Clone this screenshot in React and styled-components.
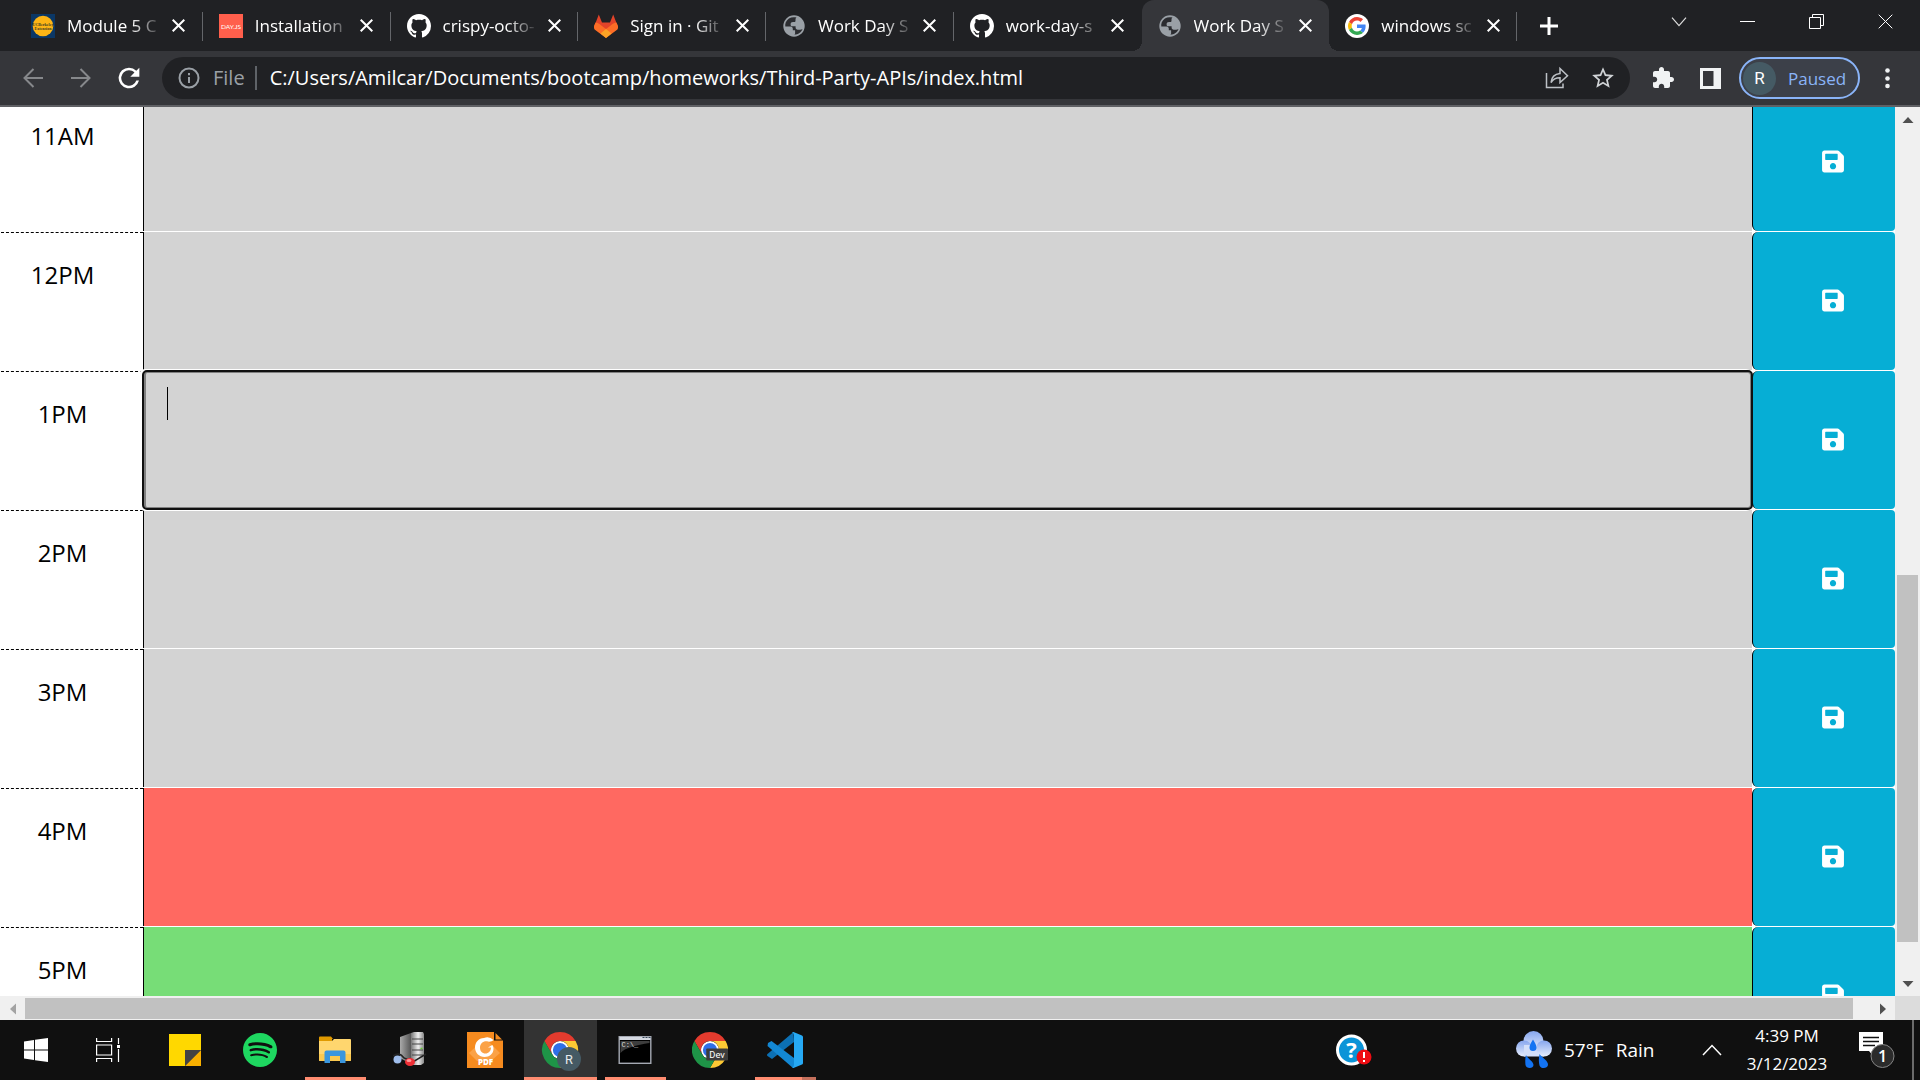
import React from 'react';
import styled, { createGlobalStyle, css } from 'styled-components';

const UI = "'Open Sans', 'Noto Sans', sans-serif";

const GlobalStyle = createGlobalStyle`
  *, *::before, *::after { box-sizing: border-box; }
  html, body { margin: 0; padding: 0; }
  body { background: #fff; font-family: ${UI}; overflow: hidden; }
  button { font: inherit; color: inherit; border: 0; padding: 0; background: none; cursor: pointer; }
  svg { display: block; flex: none; }
`;

/* ---------- layout ---------- */

const Desktop = styled.div`
  display: flex;
  flex-direction: column;
  height: 100vh;
`;

const TabStrip = styled.header`
  display: flex;
  height: 51px;
  padding-left: 15px;
  background: #202124;
  color: #fff;
`;

const TabList = styled.div`
  display: flex;
  flex: 0 1 1502px;
  min-width: 0;
`;

const Tab = styled.div`
  position: relative;
  flex: 1 1 0;
  min-width: 0;
  display: flex;
  align-items: center;
  gap: 12px;
  padding: 0 16px;
  ${p => p.$divided && css`
    &::after {
      content: '';
      position: absolute;
      right: 0;
      top: 12px;
      width: 1px;
      height: 29px;
      background: #64666a;
    }
  `}
  ${p => p.$active && css`
    background: #35363a;
    border-radius: 12px 12px 0 0;
    &::before, &::after {
      content: '';
      position: absolute;
      bottom: 0;
      width: 10px;
      height: 10px;
    }
    &::before { left: -10px; background: radial-gradient(circle at 0 0, transparent 10px, #35363a 10px); }
    &::after { right: -10px; background: radial-gradient(circle at 100% 0, transparent 10px, #35363a 10px); }
  `}
`;

const TabTitle = styled.span`
  flex: 1;
  min-width: 0;
  white-space: nowrap;
  font-size: 17px;
  line-height: 24px;
  mask-image: linear-gradient(to right, #000 70%, transparent 105%);
`;

const TabClose = styled.button`
  display: grid;
  place-items: center;
  width: 16px;
  height: 24px;
`;

const NewTab = styled.button`
  width: 64px;
  display: grid;
  place-items: center;
`;

const WindowControls = styled.div`
  display: flex;
  align-items: flex-start;
  margin-left: auto;
`;

const WindowButton = styled.button`
  display: grid;
  place-items: center;
  width: 69px;
  height: 43px;
`;

const Toolbar = styled.div`
  display: flex;
  align-items: center;
  height: 56px;
  padding: 0 13px 0 9px;
  background: #35363a;
  border-bottom: 2px solid #5f6064;
  color: #f1f3f4;
`;

const ToolButton = styled.button`
  display: grid;
  place-items: center;
  width: ${p => p.$width || 48}px;
  height: 42px;
`;

const Omnibox = styled.div`
  flex: 1;
  display: flex;
  align-items: center;
  height: 42px;
  margin: 0 8px 0 9px;
  padding: 0 5px 0 16px;
  border-radius: 21px;
  background: #202124;
`;

const Scheme = styled.label`
  margin: 0 10px 0 13px;
  color: #9aa0a6;
  font-size: 20px;
  line-height: 28px;
`;

const Address = styled.input`
  flex: 1;
  min-width: 0;
  height: 24px;
  padding: 0 0 0 13px;
  border: 0;
  border-left: 2px solid #5f6368;
  outline: 0;
  background: transparent;
  color: #fff;
  font: 20px/24px ${UI};
`;

const Profile = styled.button`
  display: flex;
  align-items: center;
  width: 121px;
  height: 42px;
  margin: 0 7px 0 5px;
  padding-left: 2px;
  gap: 12px;
  border: 2px solid #8ab4f8;
  border-radius: 21px;
  background: #3c4049;
  color: #8ab4f8;
  font-size: 17px;
`;

const Avatar = styled.span`
  display: grid;
  place-items: center;
  width: 33px;
  height: 33px;
  border-radius: 50%;
  background: #455a64;
  color: #fff;
  font: 17px/33px Roboto, sans-serif;
`;

/* ---------- planner page ---------- */

const Viewport = styled.div`
  flex: 1;
  min-height: 0;
  display: grid;
  grid-template: minmax(0, 1fr) 24px / minmax(0, 1fr) 25px;
  background: #f0f0f0;
`;

const Page = styled.main`
  overflow: hidden;
  background: #fff;
`;

const Schedule = styled.div`
  margin-top: -14px;
  padding-left: 1px;
`;

const TimeBlock = styled.section`
  display: flex;
  height: 139px;
`;

const Hour = styled.label`
  width: 142px;
  padding: 24px 19px 0 0;
  border-top: 1px dashed #000;
  color: #000;
  font: 24px/36px 'Open Sans', sans-serif;
  text-align: center;
`;

const Slot = styled.div`
  position: relative;
  flex: 1;
  display: flex;
  padding-bottom: 1px;
  z-index: ${p => (p.$focused ? 1 : 0)};
`;

const tones = { past: '#d3d3d3', present: '#ff6961', future: '#77dd77' };

const Entry = styled.textarea`
  flex: 1;
  padding: 16px 24px;
  border: 0;
  border-left: 1px solid #000;
  outline: 0;
  resize: none;
  background: ${p => tones[p.$tone]};
  color: #000;
  font: 24px/36px 'Open Sans', sans-serif;
  ${p => p.$focused && css`
    border-radius: 4px;
    outline: 2px solid #101010;
    outline-offset: -1px;
    box-shadow: -2px 0 0 2px #fff, inset 0 0 0 2px #808080;
  `}
`;

const Caret = styled.span`
  position: absolute;
  left: 24px;
  top: 16px;
  width: 1px;
  height: 33px;
  background: #000;
`;

const Save = styled.button`
  display: flex;
  align-items: center;
  justify-content: center;
  width: 143px;
  height: 138px;
  padding: 0 0 1px 18px;
  border-left: 1px solid #000;
  border-radius: 6px 4px 4px 6px;
  background: #06aed5;
  color: #fff;
`;

const ScrollBar = styled.div`
  display: flex;
  flex-direction: ${p => (p.$vertical ? 'column' : 'row')};
  padding: ${p => (p.$vertical ? '0 2px' : '2px 0 1px')};
`;

const ScrollArrow = styled.span`
  flex: 0 0 25px;
  display: grid;
  place-items: center;
`;

const ScrollThumb = styled.span`
  flex: ${p => p.$grow} 1 0;
  background: #c1c1c1;
`;

const ScrollGap = styled.span`
  flex: ${p => p.$grow} 1 0;
`;

const Corner = styled.div`
  background: #dcdcdc;
`;

/* ---------- taskbar ---------- */

const Taskbar = styled.footer`
  display: flex;
  align-items: stretch;
  height: 60px;
  background: #101010;
  color: #fff;
`;

const StartButton = styled.button`
  width: 72px;
  display: grid;
  place-items: center;
`;

const Apps = styled.div`
  display: flex;
  gap: 2px;
  padding-left: 5px;
`;

const AppButton = styled.button`
  position: relative;
  width: 73px;
  padding-right: 1px;
  display: grid;
  place-items: center;
  background: ${p => (p.$active ? '#333' : 'transparent')};
  ${p => p.$running && css`
    &::after {
      content: '';
      position: absolute;
      bottom: 0;
      left: ${p.$active ? 0 : 6}px;
      right: ${p.$active ? 0 : 6}px;
      height: 3px;
      background: ${p.$stacked ? 'linear-gradient(to right, #ff8c70 47px, #c4705c 47px)' : '#ff8c70'};
    }
  `}
`;

const Tray = styled.div`
  display: flex;
  align-items: center;
  margin-left: auto;
`;

const Help = styled.button`
  margin-right: 144px;
`;

const Weather = styled.button`
  display: flex;
  align-items: center;
  gap: 12px;
  width: 176px;
  font-size: 19px;
  white-space: nowrap;
`;

const TrayButton = styled.button`
  width: ${p => p.$width}px;
  height: 60px;
  display: grid;
  place-items: center;
`;

const Clock = styled.time`
  width: 110px;
  text-align: center;
  font-size: 17px;
  line-height: 28px;
`;

const ShowDesktop = styled.button`
  align-self: stretch;
  width: 8px;
  border-left: 2px solid #6b6b6b;
`;

/* ---------- icons ---------- */

const GithubIcon = () => (
  <svg width="24" height="24" viewBox="0 0 16 16" fill="#fff">
    <path d="M8 0C3.58 0 0 3.58 0 8c0 3.54 2.29 6.53 5.47 7.59.4.07.55-.17.55-.38 0-.19-.01-.82-.01-1.49-2.01.37-2.53-.49-2.69-.94-.09-.23-.48-.94-.82-1.13-.28-.15-.68-.52-.01-.53.63-.01 1.08.58 1.23.82.72 1.21 1.87.87 2.33.66.07-.52.28-.87.51-1.07-1.78-.2-3.64-.89-3.64-3.95 0-.87.31-1.59.82-2.15-.08-.2-.36-1.02.08-2.12 0 0 .67-.21 2.2.82.64-.18 1.32-.27 2-.27s1.36.09 2 .27c1.53-1.04 2.2-.82 2.2-.82.44 1.1.16 1.92.08 2.12.51.56.82 1.27.82 2.15 0 3.07-1.87 3.75-3.65 3.95.29.25.54.73.54 1.48 0 1.07-.01 1.93-.01 2.2 0 .21.15.46.55.38A8.01 8.01 0 0 0 16 8c0-4.42-3.58-8-8-8z" />
  </svg>
);

const GlobeIcon = () => (
  <svg width="24" height="24" viewBox="0 0 24 24">
    <circle cx="12" cy="12" r="10.7" fill="#9aa0a6" />
    <path fill="#2b2c30" d="M14.5 3.6c-4.400-1.300-9 .5-10.700 4.700-.6 1.500-.7 2.900-.5 4.200h5.200c1.600 0 2.300 1 2.300 2.300v1.400h2.300v3.300c0 .5-.3.900-.8 1.200 3.900-.1 7-2.300 8.200-5.700-.7.500-1.500.7-2.400.7h-2.300c-1.300 0-2.200-.9-2.200-2.200v-1.200h-3.300c-1.200 0-1.700-.8-1.700-1.800 0-1.600.9-2.400 2.400-2.400h1.300c.8 0 1.200-.5 1.200-1.300V5.500c0-.8.3-1.400 1-1.900z" />
  </svg>
);

const BootcampIcon = () => (
  <svg width="24" height="24" viewBox="0 0 24 24">
    <rect width="24" height="24" fill="#0b3765" />
    <circle cx="12" cy="12" r="10.300" fill="#fdb515" />
    <text x="12" y="11.500" textAnchor="middle" fontFamily="Liberation Serif, serif" fontSize="4" fontWeight="bold" fill="#3b3a24">UCBerkeley</text>
    <text x="12" y="16" textAnchor="middle" fontFamily="Liberation Serif, serif" fontSize="4" fontWeight="bold" fill="#3b3a24">Extension</text>
  </svg>
);

const DayIcon = () => (
  <svg width="24" height="24" viewBox="0 0 24 24">
    <rect width="24" height="24" fill="#ff5f4c" />
    <text x="12" y="14.500" textAnchor="middle" fontFamily="Lato, sans-serif" fontSize="6.500" fill="#fff">DAY.JS</text>
  </svg>
);

const GitlabIcon = () => (
  <svg width="24" height="24" viewBox="0 0 24 24">
    <path fill="#e24329" d="M0 13 4.800.5 8 8.500h8L19.200.5 24 13l-5 4H5z" />
    <path fill="#fc6d26" d="M12 24 .6 15.500C-.2 14.500-.2 12.500.4 11l1.200-2.500c2 .3 4 1.400 5.400 2.700l5 3.800 5-3.800c1.400-1.300 3.400-2.400 5.400-2.700l1.200 2.500c.6 1.500.6 3.500-.2 4.500z" />
    <path fill="#fca326" d="m6.500 19.500 5.500-4.500 5.500 4.500L12 24z" />
  </svg>
);

const GoogleIcon = () => (
  <svg width="24" height="24" viewBox="-8 -8 64 64">
    <circle cx="24" cy="24" r="32" fill="#fff" />
    <path fill="#EA4335" d="M24 9.500c3.540 0 6.710 1.220 9.210 3.600l6.850-6.850C35.900 2.380 30.470 0 24 0 14.620 0 6.510 5.380 2.560 13.220l7.980 6.190C12.430 13.720 17.740 9.500 24 9.500z" />
    <path fill="#4285F4" d="M46.980 24.550c0-1.570-.15-3.090-.38-4.550H24v9.020h12.940c-.58 2.960-2.260 5.480-4.780 7.180l7.730 6c4.510-4.180 7.090-10.360 7.090-17.650z" />
    <path fill="#FBBC05" d="M10.530 28.590c-.48-1.450-.76-2.990-.76-4.590s.27-3.140.76-4.590l-7.980-6.190C.92 16.460 0 20.120 0 24c0 3.880.92 7.540 2.560 10.780l7.970-6.190z" />
    <path fill="#34A853" d="M24 48c6.480 0 11.930-2.130 15.890-5.810l-7.730-6c-2.150 1.450-4.920 2.300-8.160 2.300-6.260 0-11.570-4.220-13.470-9.910l-7.980 6.190C6.510 42.620 14.620 48 24 48z" />
  </svg>
);

const Cross = ({ size, weight }) => (
  <svg width={size} height={size} viewBox={`0 0 ${size} ${size}`} stroke="#fff" strokeWidth={weight}>
    <path d={`M.7.7 ${size - 0.7} ${size - 0.7}M${size - 0.7}.7.7 ${size - 0.7}`} />
  </svg>
);

const PlusIcon = () => (
  <svg width="18" height="18" viewBox="0 0 18 18" stroke="#fff" strokeWidth="3"><path d="M9 0v18M0 9h18" /></svg>
);
const ChevronDown = () => (
  <svg width="16" height="10" viewBox="0 0 16 10" fill="none" stroke="#ddd" strokeWidth="1.200"><path d="m1 .7 7 8 7-8" /></svg>
);
const MinimizeIcon = () => (
  <svg width="15" height="15" viewBox="0 0 15 15"><path d="M0 7h15v1H0z" fill="#fff" /></svg>
);
const RestoreIcon = () => (
  <svg width="15" height="15" viewBox="0 0 15 15" fill="none" stroke="#fff"><path d="M.5 3.500h11v11H.5zM3.500 3.500v-3h11v11h-3" /></svg>
);

const ArrowIcon = ({ flip }) => (
  <svg width="20" height="20" viewBox="0 0 20 20" fill="none" stroke="#86888b" strokeWidth="2" transform={flip ? 'scale(-1 1)' : undefined}>
    <path d="M20 10H2M10.500 1 1.500 10l9 9" />
  </svg>
);
const ReloadIcon = () => (
  <svg width="22" height="22" viewBox="3.500 3.500 17 17" fill="#fff">
    <path d="M17.650 6.350A7.958 7.958 0 0 0 12 4a8 8 0 1 0 7.730 10h-2.080A6 6 0 1 1 12 6c1.660 0 3.140.69 4.220 1.780L13 11h7V4l-2.350 2.350z" />
  </svg>
);
const InfoIcon = () => (
  <svg width="22" height="22" viewBox="0 0 22 22" fill="none" stroke="#9aa0a6" strokeWidth="2">
    <circle cx="11" cy="11" r="9.500" /><path d="M11 10v6M11 6v2.200" />
  </svg>
);
const ShareIcon = () => (
  <svg width="24" height="24" viewBox="0 0 24 24" fill="none" stroke="#bdc1c6" strokeWidth="1.500">
    <path d="M1.500 7v14.500H18V17.500" />
    <path d="M6 16.500c.5-5 3-8.500 9-9V2.500l7.500 7.300-7.500 6.700v-4.700c-4 0-7 1.500-9 4.700z" />
  </svg>
);
const StarIcon = () => (
  <svg width="26" height="26" viewBox="0 0 24 24" fill="#d0d3d6">
    <path d="m22 9.240-7.190-.62L12 2 9.190 8.630 2 9.240l5.460 4.730L5.820 21 12 17.270 18.180 21l-1.630-7.030L22 9.240zM12 15.400l-3.760 2.270 1-4.280-3.320-2.880 4.380-.38L12 6.100l1.710 4.040 4.380.38-3.320 2.880 1 4.280L12 15.400z" />
  </svg>
);
const PuzzleIcon = () => (
  <svg width="24" height="24" viewBox="1 0 24 24" overflow="visible" fill="#f1f3f4">
    <path transform="translate(2 0)" d="M20.500 11H19V7c0-1.100-.9-2-2-2h-4V3.500C13 2.120 11.880 1 10.500 1S8 2.120 8 3.500V5H4c-1.100 0-1.990.9-1.990 2v3.800H3.500c1.490 0 2.700 1.210 2.700 2.700s-1.210 2.700-2.700 2.700H2V20c0 1.100.9 2 2 2h3.800v-1.500c0-1.490 1.210-2.700 2.700-2.700 1.490 0 2.700 1.210 2.700 2.700V22H17c1.100 0 2-.9 2-2v-4h1.500c1.380 0 2.500-1.120 2.500-2.500S21.880 11 20.500 11z" />
  </svg>
);
const SidePanelIcon = () => (
  <svg width="21" height="21" viewBox="0 0 21 21"><path fillRule="evenodd" fill="#f1f3f4" d="M0 0h21v21H0zM3 3v15h10.500V3z" /></svg>
);
const DotsIcon = () => (
  <svg width="5" height="21" viewBox="0 0 5 21" fill="#f1f3f4"><circle cx="2.500" cy="2.500" r="2.300" /><circle cx="2.500" cy="10.500" r="2.300" /><circle cx="2.500" cy="18" r="2.300" /></svg>
);
const SaveIcon = () => (
  <svg width="22" height="25" viewBox="0 0 448 512" fill="currentColor">
    <path d="M433.941 129.941l-83.882-83.882A48 48 0 0 0 316.118 32H48C21.490 32 0 53.490 0 80v352c0 26.510 21.490 48 48 48h352c26.510 0 48-21.490 48-48V163.882a48 48 0 0 0-14.059-33.941zM224 416c-35.346 0-64-28.654-64-64 0-35.346 28.654-64 64-64s64 28.654 64 64c0 35.346-28.654 64-64 64zm96-304.520V212c0 6.627-5.373 12-12 12H76c-6.627 0-12-5.373-12-12V108c0-6.627 5.373-12 12-12h228.520c3.183 0 6.235 1.264 8.485 3.515l3.480 3.480A11.996 11.996 0 0 1 320 111.480z" />
  </svg>
);
const Triangle = ({ turn, color = '#505050' }) => (
  <svg width="12" height="12" viewBox="0 0 12 12" fill={color}><path d="M.5 9h11L6 3z" transform={`rotate(${turn} 6 6)`} /></svg>
);

const WindowsIcon = () => (
  <svg width="24" height="24" viewBox="0 0 24 24" fill="#fff"><path d="M0 3.400 10 2v9.500H0zM11 1.800 24 0v11.500H11zM0 12.500h10V22L0 20.600zM11 12.500h13V24l-13-1.800z" /></svg>
);
const TaskViewIcon = () => (
  <svg width="24" height="24" viewBox="0 0 24 24" fill="none" stroke="#fff" strokeWidth="1.200">
    <path d="M.6 0v3.500h15V0M.6 24v-3.500h15V24M.6 7h15v10H.6zM22.500 0v6M22.500 11v13" /><path d="M21 7h3v3h-3z" fill="#fff" stroke="none" />
  </svg>
);
const NotesIcon = () => (
  <svg width="32" height="32" viewBox="0 0 32 32">
    <path d="M0 0h32v16L16 32H0z" fill="#ffd800" /><path d="M16 32 32 16v16z" fill="#f9b000" /><path d="M16 16h16L16 32z" fill="#434343" />
  </svg>
);
const SpotifyIcon = () => (
  <svg width="34" height="34" viewBox="0 0 24 24" fill="#1ed760">
    <path d="M12 0C5.400 0 0 5.400 0 12s5.400 12 12 12 12-5.400 12-12S18.660 0 12 0zm5.521 17.340c-.24.359-.66.48-1.021.24-2.820-1.740-6.360-2.101-10.561-1.141-.418.122-.779-.179-.899-.539-.12-.421.18-.78.54-.9 4.560-1.021 8.520-.6 11.640 1.320.42.18.479.659.301 1.020zm1.440-3.300c-.301.42-.841.6-1.262.3-3.239-1.980-8.159-2.580-11.939-1.380-.479.12-1.020-.12-1.140-.6-.12-.48.12-1.021.6-1.141C9.600 9.900 15 10.561 18.720 12.840c.361.181.54.78.241 1.200zm.12-3.360C15.240 8.400 8.820 8.160 5.160 9.301c-.6.179-1.200-.181-1.380-.721-.18-.601.18-1.200.72-1.381 4.260-1.260 11.280-1.020 15.721 1.621.539.3.719 1.020.419 1.560-.299.421-1.020.599-1.559.3z" />
  </svg>
);
const FolderIcon = () => (
  <svg width="32" height="28" viewBox="0 0 32 28">
    <path d="M0 1.500Q0 .5 1 .5h11l2 2.500h-1v6H0z" fill="#e09a00" />
    <path d="M0 5h13l2-2h16q1 0 1 1v20q0 1-1 1H1q-1 0-1-1z" fill="#ffd66e" />
    <path d="M0 18h32v6q0 1-1 1H1q-1 0-1-1z" fill="#fbc94f" />
    <path d="M5.500 27V16.500q0-2 2-2h17q2 0 2 2V27h-5.500v-7H11v7z" fill="#3a96dd" />
  </svg>
);
const ServerIcon = () => (
  <svg width="34" height="36" viewBox="0 0 34 36">
    <defs>
      <linearGradient id="steel"><stop offset="0" stopColor="#777" /><stop offset=".55" stopColor="#eee" /><stop offset="1" stopColor="#888" /></linearGradient>
      <linearGradient id="side"><stop offset="0" stopColor="#aaa" /><stop offset="1" stopColor="#555" /></linearGradient>
    </defs>
    <path d="m7 5 11-4v31L7 26z" fill="url(#side)" />
    <path d="m18 1 3-1h9l1 2v29l-3 2H18z" fill="url(#steel)" />
    <path d="M19 7h11M19 12h11M19 18h11M19 23h11" stroke="#444" strokeWidth="1" />
    <path d="M27.500 16.500h2" stroke="#6c3" strokeWidth="1.500" />
    <path d="M0 24q6-5 11 2l9 4 13-8" fill="none" stroke="#222" strokeWidth="1.500" />
    <ellipse cx="4.500" cy="27.500" rx="4" ry="4" fill="#9fbdec" /><ellipse cx="17" cy="30" rx="5" ry="4" fill="#ee2f36" />
    <ellipse cx="16" cy="28.500" rx="2.500" ry="1.500" fill="#ff9a9a" />
  </svg>
);
const FoxitIcon = () => (
  <svg width="36" height="36" viewBox="0 0 36 36">
    <path d="M0 0h27v8.500h9V36H0z" fill="#f68b1f" /><path d="M28.500 1 35 7.500h-6.500z" fill="#f68b1f" />
    <path d="m18 6 15 15-9 8H10L2 21z" fill="#fba247" />
    <path d="M26.500 8A9.300 9.300 0 0 0 17 6C11.500 6 8 10.500 8 15.500S12 25 17.500 25c5 0 9-3 9-8.500 0-1.500-.5-2.500-1.200-3.500l-4.300 2.500h3c0 3.500-2.500 6-5.500 6-3.500 0-5.500-2.500-5.500-6C13 11.500 16.500 8.500 21 9.500c2 .5 4 0 5.500-1.500z" fill="#fff" />
    <text x="18.500" y="33" textAnchor="middle" fontFamily="Open Sans, sans-serif" fontWeight="800" fontSize="8" fill="#fff">PDF</text>
  </svg>
);
const ChromeShapes = () => (
  <>
    <circle cx="24" cy="24" r="12" fill="#fff" />
    <path fill="#e33b2e" d="M24 12h20.781A23.994 23.994 0 0 0 3.217 12.003L13.608 30l.009-.002A11.985 11.985 0 0 1 24 12z" />
    <path fill="#fcc934" d="M34.391 30.003 24.001 48A23.994 23.994 0 0 0 44.780 12.003H23.999l-.003.009a11.985 11.985 0 0 1 10.395 17.991z" />
    <path fill="#1e9447" d="M13.609 30.003 3.218 12.006A23.994 23.994 0 0 0 24.003 48l10.390-17.997-.007-.007a11.985 11.985 0 0 1-20.777.007z" />
    <circle cx="24" cy="24" r="9.500" fill="#2f6fe8" />
  </>
);
const ChromeIcon = () => (
  <svg width="36" height="36" viewBox="0 0 48 48" overflow="visible">
    <ChromeShapes />
    <circle cx="36" cy="36" r="16" fill="#455a64" />
    <text x="36" y="42" textAnchor="middle" fontFamily="Roboto, sans-serif" fontSize="17" fill="#e6eaec">R</text>
  </svg>
);
const ChromeDevIcon = () => (
  <svg width="36" height="36" viewBox="0 0 48 48">
    <ChromeShapes />
    <rect x="19" y="22" width="29" height="16" rx="1" fill="#3c3c3c" />
    <text x="33.500" y="34" textAnchor="middle" fontFamily="Roboto, sans-serif" fontSize="12.500" fill="#fff">Dev</text>
  </svg>
);
const TerminalIcon = () => (
  <svg width="34" height="28" viewBox="0 0 33 28">
    <rect x=".7" y=".7" width="31.600" height="26.600" fill="#000" stroke="#a5a9b3" strokeWidth="1.400" />
    <path d="M1 1h31v3H1z" fill="#d5d9e2" /><path d="M24 1.500h2M27 1.500h2M30 1.500h2" stroke="#345" />
    <path d="M2 5h29v2C18 9 6 12 2 17z" fill="#3d3d3d" />
    <text x="3" y="10.500" fontFamily="Liberation Mono, monospace" fontSize="7" fill="#ddd">C:\_</text>
  </svg>
);
const CodeIcon = () => (
  <svg width="36" height="36" viewBox="0 0 36 36">
    <path d="M26.500 0 27 10 5 27 .5 24q-1-1 0-2z" fill="#0c70b4" />
    <path d="M.5 14 1 11l3.500-2L27 26v10h-1z" fill="#1388d4" />
    <path d="M26.500 0 35 3.500q1 .5 1 1.500v26q0 1-1 1.500L26.500 36l-1.500-.5q2-.5 2-3v-29Q27 1 25 .5z" fill="#26a9f4" />
  </svg>
);
const HelpIcon = () => (
  <svg width="36" height="32" viewBox="0 0 36 32">
    <circle cx="15.500" cy="16" r="14" fill="#0a94d8" stroke="#fff" strokeWidth="3" />
    <text x="15.500" y="24" textAnchor="middle" fontFamily="Open Sans, sans-serif" fontWeight="700" fontSize="22" fill="#fff">?</text>
    <circle cx="28" cy="23" r="7.500" fill="#ee0c12" /><path d="M28 18v6M28 26v2" stroke="#fff" strokeWidth="2" />
  </svg>
);
const RainIcon = () => (
  <svg width="36" height="38" viewBox="0 0 36 38">
    <defs><linearGradient id="cloud" x2="0" y2="1"><stop offset="0" stopColor="#86a6ee" /><stop offset="1" stopColor="#e6edfc" /></linearGradient></defs>
    <circle cx="17.500" cy="10" r="10" fill="url(#cloud)" />
    <circle cx="8" cy="17.500" r="8" fill="url(#cloud)" />
    <path d="M8 14h20v11.500H8z" fill="#d3dff9" />
    <circle cx="28" cy="17.500" r="8" fill="url(#cloud)" />
    <g fill="#1373f2">
      <path d="M17 8.500c1.500 3 3.500 5 3.500 8a3.500 3.500 0 0 1-7 0c0-3 2-5 3.500-8z" />
      <path d="M10 24c2 4 7.500 6.500 7.500 10 0 4-7.500 4-8 0-.3-3-.5-6 .5-10z" />
      <path d="M23.500 23c3 4 9 7 8.500 11-.5 4-7.500 4-8.500.500-.7-3-1-7 0-11.500z" />
    </g>
  </svg>
);
const ChevronUp = () => (
  <svg width="20" height="12" viewBox="0 0 20 12" fill="none" stroke="#fff" strokeWidth="1.500"><path d="m1 11 9-9.500L19 11" /></svg>
);
const NoticeIcon = () => (
  <svg width="36" height="36" viewBox="0 0 36 36">
    <path d="M0 0h24v19H16v7l-6-7H0z" fill="#fff" /><path d="M4 5.500h16M4 9.500h16M4 13.500h12" stroke="#101010" strokeWidth="1.300" />
    <circle cx="23.500" cy="24" r="11.500" fill="#2b2b2b" stroke="#858585" />
    <text x="23.500" y="29.500" textAnchor="middle" fontFamily="Open Sans, sans-serif" fontWeight="600" fontSize="16" fill="#fff">1</text>
  </svg>
);

/* ---------- data ---------- */

const tabs = [
  { title: 'Module 5 C', Icon: BootcampIcon, divided: true },
  { title: 'Installation', Icon: DayIcon, divided: true },
  { title: 'crispy-octo-', Icon: GithubIcon, divided: true },
  { title: 'Sign in · Git', Icon: GitlabIcon, divided: true },
  { title: 'Work Day S', Icon: GlobeIcon, divided: true },
  { title: 'work-day-s', Icon: GithubIcon },
  { title: 'Work Day S', Icon: GlobeIcon, active: true },
  { title: 'windows sc', Icon: GoogleIcon, divided: true },
];

const hours = [
  { label: '11AM', tone: 'past' },
  { label: '12PM', tone: 'past' },
  { label: '1PM', tone: 'past', focused: true },
  { label: '2PM', tone: 'past' },
  { label: '3PM', tone: 'past' },
  { label: '4PM', tone: 'present' },
  { label: '5PM', tone: 'future' },
];

const apps = [
  { name: 'Sticky Notes', Icon: NotesIcon },
  { name: 'Spotify', Icon: SpotifyIcon },
  { name: 'File Explorer', Icon: FolderIcon, running: true },
  { name: 'Server', Icon: ServerIcon },
  { name: 'PDF Reader', Icon: FoxitIcon },
  { name: 'Chrome', Icon: ChromeIcon, running: true, active: true },
  { name: 'Command Prompt', Icon: TerminalIcon, running: true },
  { name: 'Chrome Dev', Icon: ChromeDevIcon },
  { name: 'Visual Studio Code', Icon: CodeIcon, running: true, stacked: true },
];

export default function App() {
  return (
    <Desktop>
      <GlobalStyle />
      <TabStrip>
        <TabList>
          {tabs.map(({ title, Icon, divided, active }, i) => (
            <Tab key={i} $divided={divided} $active={active}>
              <Icon />
              <TabTitle>{title}</TabTitle>
              <TabClose aria-label="Close tab"><Cross size={13} weight={2} /></TabClose>
            </Tab>
          ))}
        </TabList>
        <NewTab aria-label="New tab"><PlusIcon /></NewTab>
        <WindowControls>
          <WindowButton aria-label="Search tabs"><ChevronDown /></WindowButton>
          <WindowButton aria-label="Minimize"><MinimizeIcon /></WindowButton>
          <WindowButton aria-label="Restore"><RestoreIcon /></WindowButton>
          <WindowButton aria-label="Close window"><Cross size={15} weight={1} /></WindowButton>
        </WindowControls>
      </TabStrip>

      <Toolbar>
        <ToolButton aria-label="Back"><ArrowIcon /></ToolButton>
        <ToolButton aria-label="Forward"><ArrowIcon flip /></ToolButton>
        <ToolButton aria-label="Reload"><ReloadIcon /></ToolButton>
        <Omnibox>
          <InfoIcon />
          <Scheme htmlFor="address">File</Scheme>
          <Address id="address" defaultValue="C:/Users/Amilcar/Documents/bootcamp/homeworks/Third-Party-APIs/index.html" />
          <ToolButton aria-label="Share"><ShareIcon /></ToolButton>
          <ToolButton aria-label="Bookmark" $width={44}><StarIcon /></ToolButton>
        </Omnibox>
        <ToolButton aria-label="Extensions"><PuzzleIcon /></ToolButton>
        <ToolButton aria-label="Side panel"><SidePanelIcon /></ToolButton>
        <Profile><Avatar>R</Avatar>Paused</Profile>
        <ToolButton aria-label="Menu" $width={40}><DotsIcon /></ToolButton>
      </Toolbar>

      <Viewport>
        <Page>
          <Schedule>
            {hours.map(({ label, tone, focused }) => (
              <TimeBlock key={label}>
                <Hour htmlFor={`hour-${label}`}>{label}</Hour>
                <Slot $focused={focused}>
                  <Entry id={`hour-${label}`} $tone={tone} $focused={focused} />
                  {focused && <Caret />}
                </Slot>
                <Save aria-label={`Save ${label}`}><SaveIcon /></Save>
              </TimeBlock>
            ))}
          </Schedule>
        </Page>
        <ScrollBar $vertical>
          <ScrollArrow><Triangle turn={0} /></ScrollArrow>
          <ScrollGap $grow={443} />
          <ScrollThumb $grow={367} />
          <ScrollGap $grow={29} />
          <ScrollArrow><Triangle turn={180} /></ScrollArrow>
        </ScrollBar>
        <ScrollBar>
          <ScrollArrow><Triangle turn={270} color="#a3a3a3" /></ScrollArrow>
          <ScrollThumb $grow={1828} />
          <ScrollGap $grow={17} />
          <ScrollArrow><Triangle turn={90} /></ScrollArrow>
        </ScrollBar>
        <Corner />
      </Viewport>

      <Taskbar>
        <StartButton aria-label="Start"><WindowsIcon /></StartButton>
        <StartButton aria-label="Task view"><TaskViewIcon /></StartButton>
        <Apps>
          {apps.map(({ name, Icon, running, active, stacked }) => (
            <AppButton key={name} aria-label={name} $running={running} $active={active} $stacked={stacked}>
              <Icon />
            </AppButton>
          ))}
        </Apps>
        <Tray>
          <Help aria-label="Help"><HelpIcon /></Help>
          <Weather><RainIcon /><span>57°F</span><span>Rain</span></Weather>
          <TrayButton aria-label="Show hidden icons" $width={40}><ChevronUp /></TrayButton>
          <Clock>4:39 PM<br />3/12/2023</Clock>
          <TrayButton aria-label="Notifications" $width={70}><NoticeIcon /></TrayButton>
          <ShowDesktop aria-label="Show desktop" />
        </Tray>
      </Taskbar>
    </Desktop>
  );
}
